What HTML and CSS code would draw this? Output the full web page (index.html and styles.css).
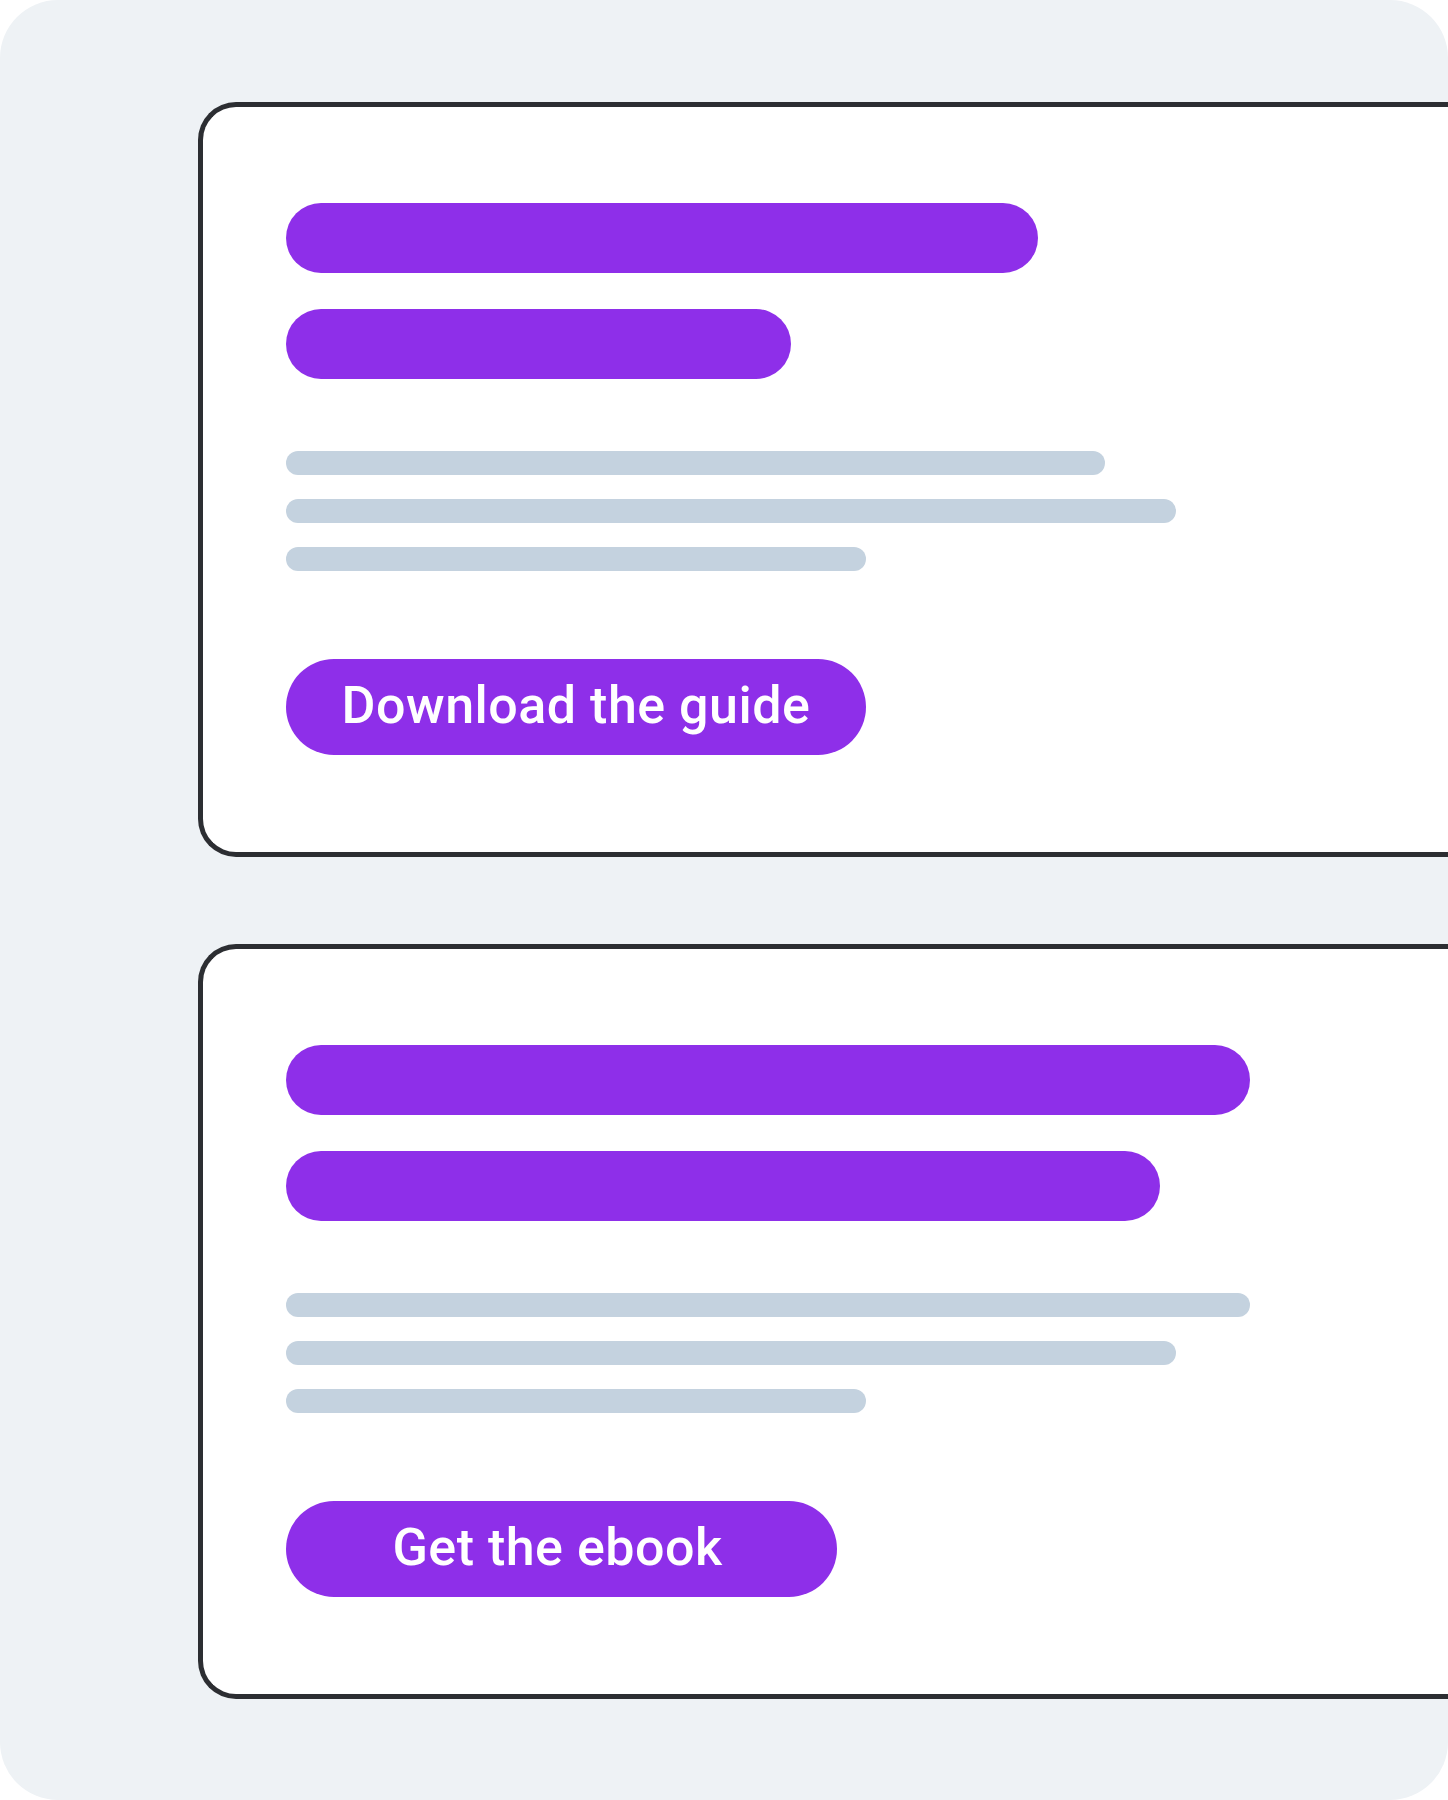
FILE: index.html
```html
<!DOCTYPE html>
<html lang="en">
<head>
    <meta charset="UTF-8">
    <meta name="viewport" content="width=device-width, initial-scale=1.0">
    <title>Content offers</title>
    <link rel="stylesheet" href="styles.css">
</head>
<body>
    <div class="frame">
        <div class="offer-card">
            <div class="title-bar w-752"></div>
            <div class="title-bar w-505"></div>

            <div class="text-lines">
                <div class="text-line w-819"></div>
                <div class="text-line w-890"></div>
                <div class="text-line w-580"></div>
            </div>

            <a class="cta cta-guide" href="#">Download the guide</a>
        </div>

        <div class="offer-card">
            <div class="title-bar w-964"></div>
            <div class="title-bar w-874"></div>

            <div class="text-lines">
                <div class="text-line w-964"></div>
                <div class="text-line w-890"></div>
                <div class="text-line w-580"></div>
            </div>

            <a class="cta cta-ebook" href="#">Get the ebook</a>
        </div>
    </div>
</body>
</html>
```

FILE: styles.css
```css
body {
    margin: 0;
    background: #ffffff;
    font-family: Roboto, Lato, sans-serif;
}

.frame {
    width: 1448px;
    height: 1800px;
    box-sizing: border-box;
    padding: 102px 0 0 198px;
    background: #eef2f5;
    border-radius: 58px;
    overflow: hidden;
    display: flex;
    flex-direction: column;
    gap: 87px;
}

.offer-card {
    background: #ffffff;
    border: 5px solid #2c2e32;
    border-right: none;
    border-radius: 38px 0 0 38px;
    padding: 96px 0 97px 83px;
    display: flex;
    flex-direction: column;
    align-items: flex-start;
}

.title-bar {
    height: 70px;
    border-radius: 35px;
    background: #8e2fe9;
}
.title-bar + .title-bar { margin-top: 36px; }

.text-lines {
    margin-top: 72px;
    display: flex;
    flex-direction: column;
    gap: 24px;
}
.text-line {
    height: 24px;
    border-radius: 12px;
    background: #c4d2df;
}

.cta {
    margin-top: 88px;
    height: 96px;
    border-radius: 48px;
    background: #8e2fe9;
    color: #ffffff;
    text-decoration: none;
    font-size: 52px;
    font-weight: 500;
    letter-spacing: 0.5px;
    display: flex;
    align-items: center;
    justify-content: center;
    padding-bottom: 4px;
    box-sizing: border-box;
}
.cta-guide { width: 580px; }
.cta-ebook { width: 551px; padding-right: 8px; }

/* bar widths */
.w-505 { width: 505px; }
.w-580 { width: 580px; }
.w-752 { width: 752px; }
.w-819 { width: 819px; }
.w-874 { width: 874px; }
.w-890 { width: 890px; }
.w-964 { width: 964px; }
```
